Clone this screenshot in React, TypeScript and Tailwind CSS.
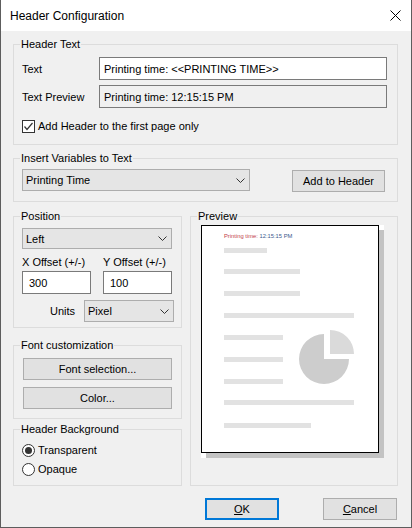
import { ReactNode } from "react";

function GroupBox({ label, className = "", bodyClassName = "", children }: { label: string; className?: string; bodyClassName?: string; children: ReactNode }) {
  return (
    <fieldset className={`border border-[#dcdcdc] ${className}`}>
      <legend className="ml-[6px] px-[1px] leading-[16px]">{label}</legend>
      <div className={bodyClassName}>{children}</div>
    </fieldset>
  );
}

function Chevron() {
  return (
    <svg width="9" height="5" viewBox="0 0 9 5" className="shrink-0">
      <polyline points="0.5,0.5 4.5,4.5 8.5,0.5" fill="none" stroke="#333" strokeWidth="1" />
    </svg>
  );
}

function ComboBox({ value, className = "" }: { value: string; className?: string }) {
  return (
    <div className={`flex items-center justify-between border border-[#adadad] bg-[#e5e5e5] pl-[3px] pr-[4px] ${className}`}>
      <span>{value}</span>
      <Chevron />
    </div>
  );
}

function Button({ children, className = "" }: { children: ReactNode; className?: string }) {
  return (
    <button className={`flex h-[22px] items-center justify-center border border-[#adadad] bg-[#e1e1e1] ${className}`}>
      {children}
    </button>
  );
}

function TextBox({ value, className = "", readOnly = false }: { value: string; className?: string; readOnly?: boolean }) {
  return (
    <div className={`flex h-[23px] items-center border border-[#7a7a7a] pl-[4px] ${readOnly ? "bg-[#f0f0f0]" : "bg-white"} ${className}`}>
      {value}
    </div>
  );
}

function Radio({ label, checked }: { label: string; checked?: boolean }) {
  return (
    <label className="flex h-[16px] items-center">
      <span className="flex h-[13px] w-[13px] items-center justify-center rounded-full border border-[#333] bg-white">
        {checked ? <span className="h-[7px] w-[7px] rounded-full bg-[#333]" /> : null}
      </span>
      <span className="ml-[3px]">{label}</span>
    </label>
  );
}

// grey placeholder lines on the page thumbnail: [width, top margin]
const pageLines: [number, number][] = [
  [43, 8],
  [76, 16],
  [76, 17],
  [130, 17],
  [59, 17],
  [59, 17],
  [59, 17],
  [130, 16],
  [87, 18],
];

function PagePreview() {
  return (
    <div className="ml-[10px] mt-[1px] w-fit bg-white pb-[5px] pr-[5px]">
      <div className="relative h-[228px] w-[178px] border border-black bg-white pl-[22px] pt-[6px] shadow-[5px_5px_0_0_#c3c3c3]">
        <div className="text-[5.8px] leading-[8px]">
          <span className="text-[#c0404a]">Printing time: </span>
          <span className="text-[#3c5a8c]">12:15:15 PM</span>
        </div>
        {pageLines.map(([w, mt], i) => (
          <div key={i} className="h-[5px] bg-[#e2e2e2]" style={{ width: w, marginTop: mt }} />
        ))}
        <svg width="56" height="56" viewBox="0 0 56 56" className="absolute left-[97px] top-[103px]">
          <path d="M25 30 L25 5 A25 25 0 1 0 50 30 Z" fill="#cdcdcd" />
          <path d="M31 25 L31 1 A24 24 0 0 1 55 25 Z" fill="#dadada" />
        </svg>
      </div>
    </div>
  );
}

export default function App() {
  return (
    <div className="flex h-[528px] w-[412px] flex-col border-x border-b border-[#5d5d5d] bg-[#f0f0f0] font-['Liberation_Sans',Arial,sans-serif] text-[11px] leading-[16px] text-black">
      <div className="flex h-[31px] shrink-0 items-center justify-between bg-white pl-[9px] pr-[10px] text-[12px]">
        <span>Header Configuration</span>
        <svg width="11" height="11" viewBox="0 0 11 11">
          <path d="M0.5 0.5 L10.5 10.5 M10.5 0.5 L0.5 10.5" stroke="#000" strokeWidth="1" />
        </svg>
      </div>

      <div className="flex flex-col pl-[12px] pr-[13px] pt-[5px]">
        <GroupBox label="Header Text" bodyClassName="pb-[10px] pl-[8px]">
          <div className="mt-[5px] flex items-center">
            <span className="w-[77px]">Text</span>
            <TextBox value="Printing time: <<PRINTING TIME>>" className="w-[288px]" />
          </div>
          <div className="mt-[5px] flex items-center">
            <span className="w-[77px]">Text Preview</span>
            <TextBox value="Printing time: 12:15:15 PM" className="w-[288px]" readOnly />
          </div>
          <label className="mt-[10px] flex h-[16px] items-center">
            <span className="flex h-[13px] w-[13px] items-center justify-center border border-[#333] bg-white">
              <svg width="11" height="11" viewBox="0 0 11 11">
                <polyline points="1.5,5.5 4,8.5 9.5,2" fill="none" stroke="#333" strokeWidth="1.2" />
              </svg>
            </span>
            <span className="ml-[3px]">Add Header to the first page only</span>
          </label>
        </GroupBox>

        <GroupBox label="Insert Variables to Text" className="mt-[5px]" bodyClassName="pb-[9px] pl-[8px]">
          <div className="mt-[3px] flex items-start">
            <ComboBox value="Printing Time" className="h-[22px] w-[228px]" />
            <Button className="ml-[42px] mt-[1px] w-[93px]">Add to Header</Button>
          </div>
        </GroupBox>

        <div className="mt-[6px] flex gap-[8px]">
          <div className="flex w-[169px] flex-col">
            <GroupBox label="Position" bodyClassName="pb-[5px] pl-[8px]">
              <ComboBox value="Left" className="mt-[4px] h-[21px] w-[150px]" />
              <div className="mt-[5px] flex">
                <span className="w-[81px]">X Offset (+/-)</span>
                <span>Y Offset (+/-)</span>
              </div>
              <div className="mt-[1px] flex">
                <TextBox value="300" className="w-[69px] pl-[6px]" />
                <TextBox value="100" className="ml-[12px] w-[69px] pl-[6px]" />
              </div>
              <div className="mt-[6px] flex items-center">
                <span className="ml-[28px] w-[34px]">Units</span>
                <ComboBox value="Pixel" className="h-[22px] w-[90px]" />
              </div>
            </GroupBox>

            <GroupBox label="Font customization" className="mt-[9px]" bodyClassName="pb-[9px] pl-[9px]">
              <Button className="mt-[5px] w-[149px]">Font selection...</Button>
              <Button className="mt-[7px] w-[149px]">Color...</Button>
            </GroupBox>

            <GroupBox label="Header Background" className="mt-[2px]" bodyClassName="pb-[8px] pl-[8px]">
              <div className="mt-[5px]">
                <Radio label="Transparent" checked />
              </div>
              <div className="mt-[3px]">
                <Radio label="Opaque" />
              </div>
            </GroupBox>
          </div>

          <GroupBox label="Preview" className="w-[208px]">
            <PagePreview />
          </GroupBox>
        </div>

        <div className="mt-[12px] flex justify-end pr-[1px]">
          <button className="flex h-[22px] w-[74px] items-center justify-center border-2 border-[#0078d7] bg-[#e1e1e1]">
            <span>
              <span className="underline">O</span>K
            </span>
          </button>
          <Button className="ml-[44px] w-[74px]">
            <span>
              <span className="underline">C</span>ancel
            </span>
          </Button>
        </div>
      </div>
    </div>
  );
}
